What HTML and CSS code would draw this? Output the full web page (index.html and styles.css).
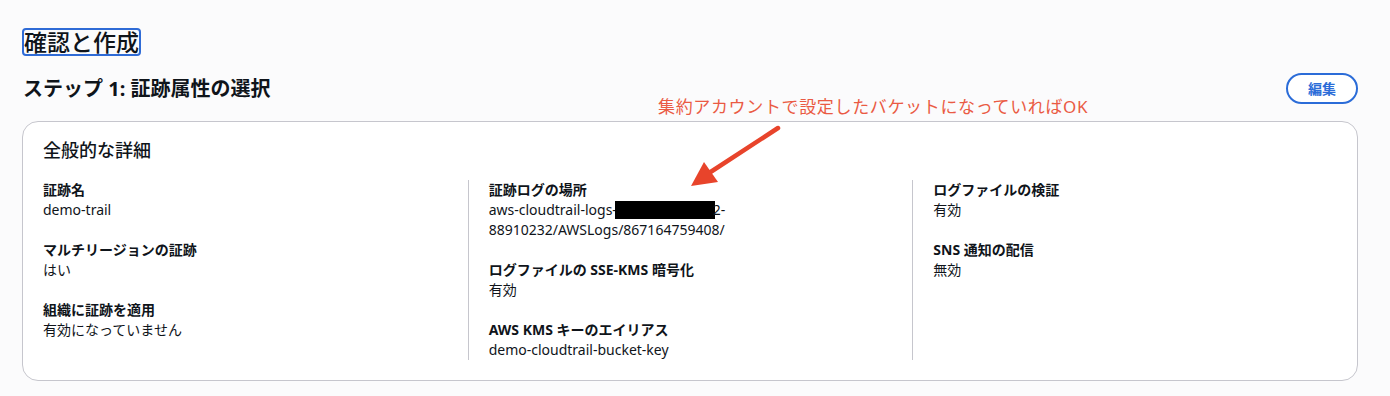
FILE: index.html
```html
<!DOCTYPE html>
<html lang="ja">
<head>
<meta charset="utf-8">
<title>確認と作成</title>
<link rel="stylesheet" href="styles.css">
</head>
<body>
<div class="page">
  <div class="title-row"><h1 class="title">確認と作成</h1></div>
  <div class="step-head">
    <h2 class="step-title">ステップ 1: 証跡属性の選択</h2>
    <button class="edit-btn" type="button">編集</button>
  </div>
  <section class="card">
    <h3 class="card-title">全般的な詳細</h3>
    <div class="grid">
      <div class="col">
        <div class="item"><div class="label">証跡名</div><div class="value">demo-trail</div></div>
        <div class="item"><div class="label">マルチリージョンの証跡</div><div class="value">はい</div></div>
        <div class="item"><div class="label">組織に証跡を適用</div><div class="value">有効になっていません</div></div>
      </div>
      <div class="col">
        <div class="item"><div class="label">証跡ログの場所</div><div class="value">aws-cloudtrail-logs-<span class="redact"></span>2-<br>88910232/AWSLogs/867164759408/</div></div>
        <div class="item"><div class="label">ログファイルの SSE-KMS 暗号化</div><div class="value">有効</div></div>
        <div class="item"><div class="label">AWS KMS キーのエイリアス</div><div class="value">demo-cloudtrail-bucket-key</div></div>
      </div>
      <div class="col">
        <div class="item"><div class="label">ログファイルの検証</div><div class="value">有効</div></div>
        <div class="item"><div class="label">SNS 通知の配信</div><div class="value">無効</div></div>
      </div>
    </div>
  </section>
  <div class="note">集約アカウントで設定したバケットになっていればOK</div>
  <svg class="arrow" viewBox="680 120 110 70" width="110" height="70" aria-hidden="true">
    <line x1="778" y1="128" x2="706" y2="175" stroke="#e8442b" stroke-width="4.5" stroke-linecap="round"/>
    <polygon points="691,186 704,162 718,182" fill="#e8442b"/>
  </svg>
</div>
</body>
</html>
```
FILE: styles.css
```css
* { box-sizing: border-box; }
html, body { margin: 0; padding: 0; }
body {
  background: #fbfbfc;
  color: #0f141a;
  font-family: "Noto Sans", "Noto Sans CJK JP", sans-serif;
  font-size: 14px;
  line-height: 20px;
}
.page {
  position: relative;
  width: 1390px;
  height: 396px;
  padding: 28px 32px 0 22px;
}
.title-row { display: flex; }
.title {
  margin: 0;
  font-size: 23px;
  line-height: 24px;
  font-weight: 500;
  border: 2px solid #2f6bd6;
  border-radius: 4px;
}
.step-head {
  margin-top: 17px;
  height: 31px;
  display: flex;
  align-items: center;
  justify-content: space-between;
}
.step-title {
  margin: 0 0 0 1px;
  font-size: 20px;
  line-height: 24px;
  font-weight: 700;
}
.edit-btn {
  width: 72px;
  height: 31px;
  border: 2px solid #2b6cd8;
  border-radius: 16px;
  background: #fff;
  color: #2b6cd8;
  font-family: inherit;
  font-size: 14px;
  font-weight: 700;
  line-height: 20px;
  padding: 0;
  display: flex;
  align-items: center;
  justify-content: center;
}
.card {
  margin-top: 17px;
  background: #fff;
  border: 1px solid #c6c6cd;
  border-radius: 16px;
  padding: 0 0 20px;
}
.card-title {
  margin: 0;
  padding: 17px 20px 19px;
  font-size: 18px;
  line-height: 22px;
  font-weight: 500;
}
.grid {
  display: grid;
  grid-template-columns: repeat(3, 1fr);
}
.col {
  display: flex;
  flex-direction: column;
  gap: 20px;
  padding: 0 20px;
  min-height: 180px;
}
.col + .col { border-left: 1px solid #c6c6cd; }
.label { font-weight: 700; }
.redact {
  display: inline-block;
  width: 100px;
  height: 18px;
  background: #000;
  vertical-align: -4px;
  margin-left: -2px;
  margin-right: -2px;
}
.note {
  position: absolute;
  left: 658px;
  top: 96px;
  font-size: 17px;
  line-height: 22px;
  letter-spacing: 0.65px;
  color: #ea5a43;
  white-space: nowrap;
}
.arrow {
  position: absolute;
  left: 680px;
  top: 120px;
  overflow: visible;
}
```
